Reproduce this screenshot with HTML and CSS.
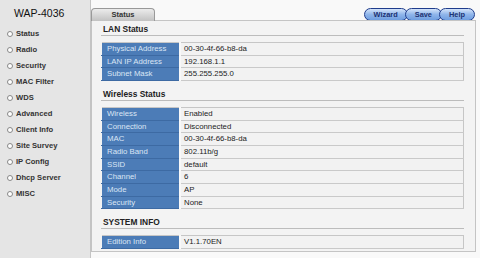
FILE: index.html
```html
<!DOCTYPE html>
<html lang="en">
<head>
    <meta charset="UTF-8">
    <title>WAP-4036</title>
    <link rel="stylesheet" href="styles.css">
</head>
<body>
    <div id="side">
        <h1>WAP-4036</h1>
        <ul class="menu">
            <li><span class="dot"></span>Status</li>
            <li><span class="dot"></span>Radio</li>
            <li><span class="dot"></span>Security</li>
            <li><span class="dot"></span>MAC Filter</li>
            <li><span class="dot"></span>WDS</li>
            <li><span class="dot"></span>Advanced</li>
            <li><span class="dot"></span>Client Info</li>
            <li><span class="dot"></span>Site Survey</li>
            <li><span class="dot"></span>IP Config</li>
            <li><span class="dot"></span>Dhcp Server</li>
            <li><span class="dot"></span>MISC</li>
        </ul>
    </div>
    <div id="main">
        <div class="topbar">
            <div class="tab">Status</div>
            <div class="btns">
                <span class="btn">Wizard</span>
                <span class="btn">Save</span>
                <span class="btn">Help</span>
            </div>
        </div>
        <div class="panel">
            <h2>LAN Status</h2>
            <table class="info">
                <tr><th>Physical Address</th><td>00-30-4f-66-b8-da</td></tr>
                <tr><th>LAN IP Address</th><td>192.168.1.1</td></tr>
                <tr><th>Subnet Mask</th><td>255.255.255.0</td></tr>
            </table>

            <h2>Wireless Status</h2>
            <table class="info">
                <tr><th>Wireless</th><td>Enabled</td></tr>
                <tr><th>Connection</th><td>Disconnected</td></tr>
                <tr><th>MAC</th><td>00-30-4f-66-b8-da</td></tr>
                <tr><th>Radio Band</th><td>802.11b/g</td></tr>
                <tr><th>SSID</th><td>default</td></tr>
                <tr><th>Channel</th><td>6</td></tr>
                <tr><th>Mode</th><td>AP</td></tr>
                <tr><th>Security</th><td>None</td></tr>
            </table>

            <h2>SYSTEM INFO</h2>
            <table class="info">
                <tr><th>Edition Info</th><td>V1.1.70EN</td></tr>
            </table>
        </div>
    </div>
</body>
</html>
```
FILE: styles.css
```css
*{
    padding:0;
    margin:0;
}
html,body{
    width:100%;
    height:100%;
    overflow:hidden;
}
body{
    display:flex;
    font-family:"Liberation Sans",Arial,sans-serif;
    color:#222;
    background-color:#f9f9f9;
}
#side{
    width:90px;
    flex:none;
    background-color:#e5e5e5;
    border-right:1px solid #c4c4c4;
}
#side h1{
    font-size:10.5px;
    font-weight:normal;
    color:#111;
    padding:7px 0 0 14px;
    height:18.5px;
}
.menu{
    list-style:none;
}
.menu li{
    height:16px;
    line-height:16px;
    font-size:7.6px;
    font-weight:bold;
    color:#333;
    display:flex;
    align-items:center;
    padding-left:7px;
}
.dot{
    width:4px;
    height:4px;
    border:1px solid #888;
    border-radius:50%;
    background:#fff;
    margin-right:3px;
}
#main{
    flex:1;
    min-width:0;
    display:flex;
    flex-direction:column;
}
.topbar{
    height:20px;
    display:flex;
    justify-content:space-between;
    align-items:flex-end;
    padding-right:5px;
}
.tab{
    width:62px;
    height:12px;
    line-height:12px;
    margin-bottom:-1px;
    text-align:center;
    font-size:7.5px;
    font-weight:bold;
    color:#333;
    border:1px solid #999;
    border-bottom:none;
    border-radius:4px 4px 0 0;
    background:linear-gradient(#ececec,#c2c2c2);
    position:relative;
}
.btns{
    display:flex;
    align-self:flex-start;
    margin-top:8px;
}
.btn{
    height:11px;
    line-height:11px;
    padding:0 9px;
    margin-left:-3px;
    font-size:7.4px;
    font-weight:bold;
    color:#1c3272;
    border:1px solid #1f3c8c;
    border-radius:7px;
    background:linear-gradient(#d4e4fa,#8fb5ea 50%,#6f9ee0);
}
.btn:first-child{
    margin-left:0;
}
.panel{
    height:230px;
    margin-right:4px;
    border:1px solid #c4c4c4;
    background-color:#f3f3f3;
    padding:0 11px 0 9px;
}
.panel h2{
    font-size:8.4px;
    color:#222;
    height:13px;
    line-height:14px;
    padding:1px 0 0 2px;
    border-bottom:1px solid #bcbcbc;
    margin-bottom:6px;
}
.info{
    width:100%;
    border-collapse:collapse;
    border:1px solid #c6c6c6;
    font-size:7.8px;
    margin-bottom:5px;
}
.info th,.info td{
    height:11.67px;
    line-height:11.67px;
    padding-top:0;
    padding-bottom:0;
}
.info th{
    width:72px;
    text-align:left;
    font-weight:normal;
    color:#dbe6f5;
    background-color:#4c7cb7;
    border-bottom:1px solid #3d6aa3;
    border-left:1px solid #f3f3f3;
    padding-left:5px;
}
.info td{
    background-color:#f2f2f2;
    border-bottom:1px solid #c9c9c9;
    border-left:2px solid #f8f8f8;
    padding-left:3px;
}
```
